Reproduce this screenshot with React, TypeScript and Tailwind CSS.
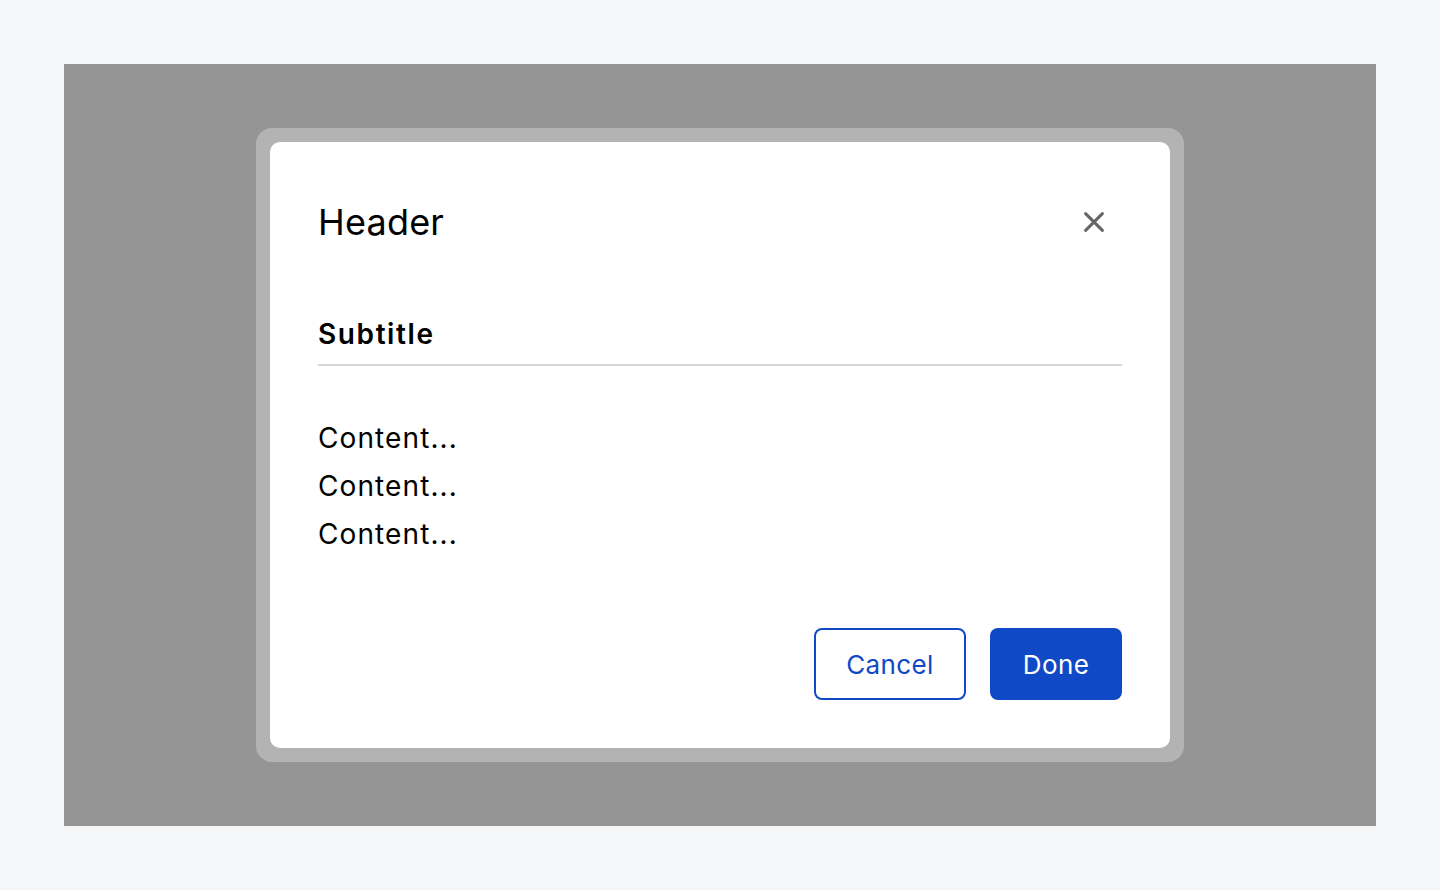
import React from "react";

export default function App() {
  return (
    <div className="w-[1440px] h-[890px] bg-[#f5f6f8] p-16" style={{ fontFamily: "Inter, 'Noto Sans', sans-serif" }}>
      <div className="w-full h-full bg-[#959595] flex justify-center pt-16">
        <div className="w-[928px] h-[634px] rounded-[16px] bg-[#b3b3b3] p-[14px]">
          <div className="w-full h-full bg-white rounded-[10px] p-12 flex flex-col">
            <div className="flex items-center justify-between h-16">
              <h1 className="text-[36px] leading-[64px] text-black tracking-[0.2px]">Header</h1>
              <svg width="28" height="28" viewBox="0 0 24 24" className="mr-[14px]">
                <path d="M4.8 4.8 L19.2 19.2 M19.2 4.8 L4.8 19.2" stroke="#666666" strokeWidth="2.6" strokeLinecap="round" />
              </svg>
            </div>
            <div className="mt-[60px] pb-[10px] border-b-2 border-[#d4d6da]">
              <h2 className="text-[28px] leading-[40px] font-semibold text-black tracking-[1.6px]">Subtitle</h2>
            </div>
            <div className="mt-12 text-[28px] leading-[48px] text-black tracking-[1.1px]">
              <p>Content...</p>
              <p>Content...</p>
              <p>Content...</p>
            </div>
            <div className="mt-auto flex justify-end gap-6">
              <button className="w-[152px] h-[72px] rounded-[8px] border-2 border-[#1049c6] text-[#1049c6] text-[26px] tracking-[0.4px]">Cancel</button>
              <button className="w-[132px] h-[72px] rounded-[8px] bg-[#1049c6] text-white text-[26px] tracking-[0.4px]">Done</button>
            </div>
          </div>
        </div>
      </div>
    </div>
  );
}
